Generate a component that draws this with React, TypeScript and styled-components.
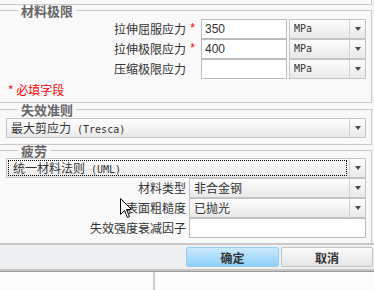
import styled, { createGlobalStyle } from 'styled-components';

const GlobalStyle = createGlobalStyle`
  html, body {
    margin: 0;
    padding: 0;
    background: #f4f4f4;
  }
  body {
    font-family: "Noto Sans CJK SC", "Liberation Sans", sans-serif;
    font-size: 12px;
    color: #333;
  }
`;

const Page = styled.div`
  position: relative;
  width: 374px;
  height: 290px;
  overflow: hidden;
  display: flex;
  flex-direction: column;
`;

const Scroller = styled.div`
  width: 372px;
  height: 243px;
  overflow: hidden;
  background: #f9f9f9;
  flex-shrink: 0;
`;

const PrevEdge = styled.div`
  height: 4px;
  border-bottom: 1px solid #c8c8c8;
  border-right: 1px solid #c8c8c8;
`;

const Group = styled.fieldset<{ $gap?: number; $top?: number; $bottom?: number; $open?: boolean }>`
  margin: ${p => p.$gap ?? 0}px 0 0 0;
  padding: ${p => p.$top ?? 3}px 5px ${p => p.$bottom ?? 6}px 6px;
  border: 1px solid #c8c8c8;
  border-left: none;
  border-bottom: ${p => (p.$open ? 'none' : '1px solid #c8c8c8')};
  min-width: 0;
`;

const Legend = styled.legend`
  margin-left: 12px;
  padding: 0 3px;
  font-size: 13px;
  line-height: 11px;
  font-weight: bold;
  color: #666;
`;

const Row = styled.div`
  display: flex;
  align-items: center;
  height: 20px;
`;

const Label = styled.div`
  width: 180px;
  text-align: right;
  line-height: 20px;
  white-space: nowrap;
`;

const Star = styled.div`
  width: 15px;
  padding-left: 3px;
  box-sizing: border-box;
  color: #f00;
  font-family: "Liberation Mono", monospace;
  font-size: 12px;
  line-height: 20px;
`;

const Input = styled.div<{ $w: number; $ml?: number }>`
  width: ${p => p.$w}px;
  margin-left: ${p => p.$ml ?? 0}px;
  height: 20px;
  box-sizing: border-box;
  border: 1px solid #bcbcbc;
  background: #fff;
  padding-left: 3px;
  font-family: "Liberation Sans", sans-serif;
  font-size: 12px;
  line-height: 18px;
  color: #333;
`;

const Select = styled.div<{ $w?: number; $ml?: number }>`
  display: flex;
  width: ${p => (p.$w ? `${p.$w}px` : '100%')};
  margin-left: ${p => p.$ml ?? 0}px;
  height: 20px;
  box-sizing: border-box;
  border: 1px solid #c4c4c4;
  background: linear-gradient(#fefefe, #e9e9e9);
`;

const SelectText = styled.div<{ $focus?: boolean }>`
  flex: 1;
  margin: ${p => (p.$focus ? '1px 2px 1px 1px' : '0')};
  border: ${p => (p.$focus ? '1px dotted #000' : 'none')};
  padding-left: 4px;
  font-family: "DejaVu Sans Mono", "Noto Sans CJK SC", monospace;
  font-size: 10px;
  line-height: ${p => (p.$focus ? 14 : 18)}px;
  color: #333;
  white-space: nowrap;
  overflow: hidden;
`;

const Han = styled.span`
  font-family: "Noto Sans CJK SC", sans-serif;
  font-size: 12px;
`;

const DropButton = styled.div`
  width: 15px;
  border-left: 1px solid #d2d2d2;
  display: flex;
  align-items: center;
  justify-content: center;

  &::after {
    content: '';
    border-left: 3.5px solid transparent;
    border-right: 3.5px solid transparent;
    border-top: 4px solid #4a4a4a;
  }
`;

const Required = styled.div`
  margin-top: 5px;
  padding-left: 2px;
  color: #f00;
  line-height: 12px;
  font-size: 12px;
`;

const Footer = styled.div`
  display: flex;
  justify-content: flex-end;
  gap: 2px;
  padding: 2px 1px;
  background: #eeeff1;
  border-top: 2px solid #c9c9c9;
  border-bottom: 2px solid #c6c6c6;
  box-shadow: 0 1px 0 #9c9c9c;
`;

const Button = styled.button<{ $primary?: boolean; $w: number }>`
  width: ${p => p.$w}px;
  height: 20px;
  padding: 0;
  border-radius: 2px;
  border: 1px solid ${p => (p.$primary ? '#98cdf0' : '#c4c4c4')};
  background: ${p =>
    p.$primary
      ? 'linear-gradient(#cbe9fd, #8fd0f8)'
      : 'linear-gradient(#fbfbfb, #e5e5e5)'};
  font-family: "Noto Sans CJK SC", sans-serif;
  font-size: 12px;
  font-weight: bold;
  color: #333;
`;

const Bottom = styled.div`
  flex: 1;
  margin-top: 1px;
  display: flex;
  background: #fcfcfc;
`;

const BottomCell = styled.div`
  width: 153px;
  border-right: 2px solid #cbcbcb;
`;

const Cursor = styled.svg`
  position: absolute;
  left: 120px;
  top: 198px;
`;

function Dropdown({ children, w, ml, focus }: { children?: React.ReactNode; w?: number; ml?: number; focus?: boolean }) {
  return (
    <Select $w={w} $ml={ml}>
      <SelectText $focus={focus}>{children}</SelectText>
      <DropButton />
    </Select>
  );
}

export default function App() {
  return (
    <Page>
      <GlobalStyle />
      <Scroller>
        <PrevEdge />

        <Group>
          <Legend>材料极限</Legend>
          <Row>
            <Label>拉伸屈服应力</Label>
            <Star>*</Star>
            <Input $w={86}>350</Input>
            <Dropdown w={77} ml={2}>MPa</Dropdown>
          </Row>
          <Row>
            <Label>拉伸极限应力</Label>
            <Star>*</Star>
            <Input $w={86}>400</Input>
            <Dropdown w={77} ml={2}>MPa</Dropdown>
          </Row>
          <Row>
            <Label>压缩极限应力</Label>
            <Star />
            <Input $w={86} />
            <Dropdown w={77} ml={2}>MPa</Dropdown>
          </Row>
          <Required>* 必填字段</Required>
        </Group>

        <Group $gap={1}>
          <Legend>失效准则</Legend>
          <Dropdown><Han>最大剪应力</Han> (Tresca)</Dropdown>
        </Group>

        <Group $top={2} $open>
          <Legend>疲劳</Legend>
          <Dropdown focus><Han>统一材料法则</Han> (UML)</Dropdown>
          <Row>
            <Label>材料类型</Label>
            <Dropdown w={177} ml={3}><Han>非合金钢</Han></Dropdown>
          </Row>
          <Row>
            <Label>表面粗糙度</Label>
            <Dropdown w={177} ml={3}><Han>已抛光</Han></Dropdown>
          </Row>
          <Row>
            <Label>失效强度衰减因子</Label>
            <Input $w={177} $ml={3} />
          </Row>
        </Group>
      </Scroller>

      <Footer>
        <Button $primary $w={93}>确定</Button>
        <Button $w={92}>取消</Button>
      </Footer>

      <Bottom>
        <BottomCell />
      </Bottom>

      <Cursor width="13" height="21" viewBox="0 0 13 21">
        <path d="M0.5 0.5 L0.5 16.5 L4.5 12.5 L7.5 19.5 L9.5 18.5 L6.5 11.5 L11.5 11.5 Z" fill="#fff" stroke="#000" strokeWidth="1" />
      </Cursor>
    </Page>
  );
}
